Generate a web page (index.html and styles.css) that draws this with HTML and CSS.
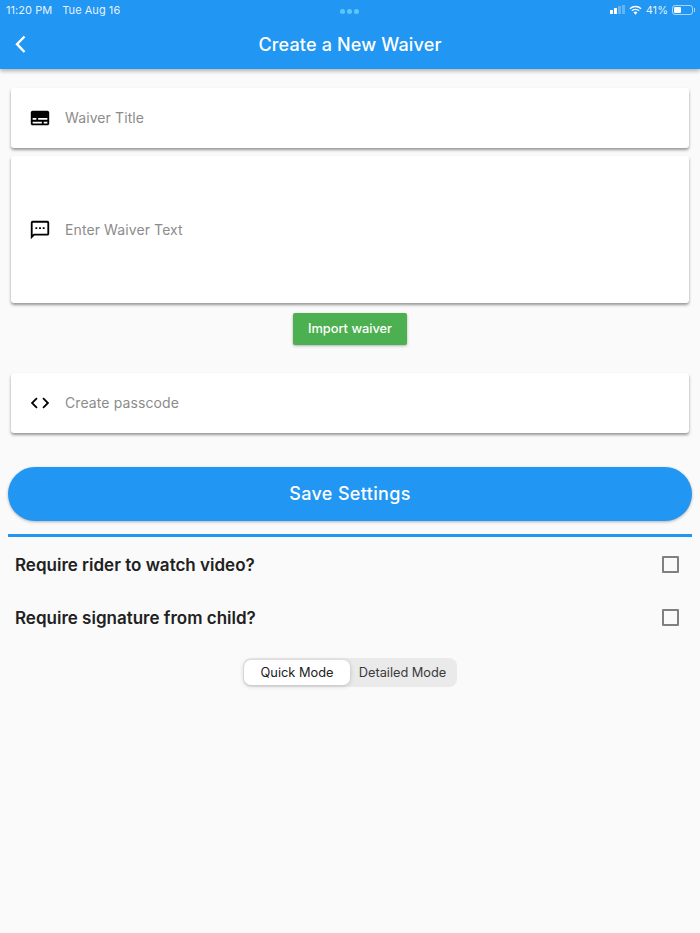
FILE: index.html
```html
<!DOCTYPE html>
<html lang="en">
<head>
    <meta charset="UTF-8">
    <meta name="viewport" content="width=device-width, initial-scale=1.0">
    <title>Create a New Waiver</title>
    <link rel="stylesheet" href="styles.css">
</head>
<body>

    <header class="app-bar">
        <div class="status-bar">
            <div class="status-left">
                <span>11:20 PM</span>
                <span>Tue Aug 16</span>
            </div>
            <div class="status-dots"><i></i><i></i><i></i></div>
            <div class="status-right">
                <div class="signal"><i></i><i></i><i class="off"></i><i class="off"></i></div>
                <svg class="wifi" width="13" height="10" viewBox="0 0 14 10">
                    <path d="M7 10 L4.9 7.7 A3 3 0 0 1 9.1 7.7 Z" fill="#fff"/>
                    <path d="M3.1 5.9 A5.6 5.6 0 0 1 10.900 5.900" fill="none" stroke="#fff" stroke-width="1.5"/>
                    <path d="M1 3.6 A8.6 8.6 0 0 1 13 3.6" fill="none" stroke="#fff" stroke-width="1.5"/>
                </svg>
                <span>41%</span>
                <div class="battery"><div class="battery-level"></div></div>
            </div>
        </div>
        <div class="title-row">
            <svg class="back" width="12" height="19" viewBox="0 0 12 19">
                <path d="M10.500 1.500 L3 9.200 L10.500 17" fill="none" stroke="#fff" stroke-width="2.4"/>
            </svg>
            <h1>Create a New Waiver</h1>
        </div>
    </header>

    <main class="content">
        <div class="fields">
            <div class="card">
                <svg class="icon" width="24" height="24" viewBox="0 0 24 24">
                    <path d="M20 4H4c-1.100 0-2 .9-2 2v12c0 1.100.9 2 2 2h16c1.100 0 2-.9 2-2V6c0-1.100-.9-2-2-2zM4 12h4v2H4v-2zm10 6H4v-2h10v2zm6 0h-4v-2h4v2zm0-4H10v-2h10v2z" fill="#000"/>
                </svg>
                <span class="placeholder">Waiver Title</span>
            </div>
            <div class="card card-tall">
                <svg class="icon" width="24" height="24" viewBox="0 0 24 24">
                    <path d="M20 2H4c-1.100 0-2 .9-2 2v18l4-4h14c1.100 0 2-.9 2-2V4c0-1.100-.9-2-2-2zm0 14H5.200L4 17.200V4h16v12zM7 9h2v2H7V9zm4 0h2v2h-2V9zm4 0h2v2h-2V9z" fill="#000"/>
                </svg>
                <span class="placeholder">Enter Waiver Text</span>
            </div>
        </div>

        <button class="import-btn">Import waiver</button>

        <div class="card passcode">
            <svg class="icon" width="24" height="24" viewBox="0 0 24 24">
                <path d="M9.400 16.600 4.800 12l4.600-4.600L8 6l-6 6 6 6 1.400-1.400zm5.200 0 4.600-4.600-4.600-4.600L16 6l6 6-6 6-1.400-1.400z" fill="#000"/>
            </svg>
            <span class="placeholder">Create passcode</span>
        </div>

        <button class="save-btn">Save Settings</button>
        <div class="divider"></div>

        <div class="option-row">
            <span>Require rider to watch video?</span>
            <div class="checkbox"></div>
        </div>
        <div class="option-row">
            <span>Require signature from child?</span>
            <div class="checkbox"></div>
        </div>

        <div class="mode-toggle">
            <div class="mode mode-active">Quick Mode</div>
            <div class="mode mode-other">Detailed Mode</div>
        </div>
    </main>

</body>
</html>
```

FILE: styles.css
```css
html, body {
    height: 100%;
}
body {
    margin: 0;
    background-color: #fafafa;
    font-family: Inter, "Noto Sans", sans-serif;
    color: #212121;
    overflow: hidden;
}
.app-bar {
    height: 69px;
    background-color: #2196f3;
    color: white;
    box-shadow: 0 2px 4px rgba(0, 0, 0, 0.3);
}
.status-bar {
    height: 19px;
    margin-bottom: 1px;
    padding: 0 5px 0 6px;
    display: flex;
    align-items: center;
    justify-content: space-between;
    font-size: 11px;
    letter-spacing: 0.05px;
    color: rgba(255, 255, 255, 0.9);
    position: relative;
}
.status-left {
    display: flex;
    gap: 10px;
}
.status-dots {
    position: absolute;
    left: 340px;
    top: 9px;
    display: flex;
    gap: 2px;
}
.status-dots i {
    width: 5px;
    height: 5px;
    border-radius: 50%;
    background-color: #5cc8fa;
}
.status-right {
    display: flex;
    align-items: center;
    gap: 4px;
}
.signal {
    display: flex;
    align-items: flex-end;
    gap: 1px;
    height: 9px;
}
.signal i {
    width: 3px;
    background-color: #fff;
}
.signal i:nth-child(1) { height: 4px; }
.signal i:nth-child(2) { height: 6px; }
.signal i:nth-child(3) { height: 8px; }
.signal i:nth-child(4) { height: 9px; }
.signal i.off {
    background-color: rgba(255, 255, 255, 0.3);
}
.battery {
    box-sizing: border-box;
    width: 21px;
    height: 10px;
    margin-right: 2px;
    padding: 1px;
    border: 1px solid rgba(255, 255, 255, 0.6);
    border-radius: 3px;
    position: relative;
}
.battery::after {
    content: "";
    position: absolute;
    right: -3px;
    top: 2px;
    width: 1px;
    height: 4px;
    background-color: rgba(255, 255, 255, 0.6);
}
.battery-level {
    width: 7px;
    height: 6px;
    background-color: #fff;
    border-radius: 1px;
}
.title-row {
    height: 49px;
    position: relative;
    display: flex;
    align-items: center;
    justify-content: center;
}
.back {
    position: absolute;
    left: 14px;
    top: 15px;
}
.title-row h1 {
    margin: 0;
    font-size: 18px;
    font-weight: 500;
    letter-spacing: 0.16px;
}
.content {
    padding: 19px 8px 0;
    display: flex;
    flex-direction: column;
}
.fields {
    display: flex;
    flex-direction: column;
    gap: 8px;
}
.card {
    height: 60px;
    margin: 0 3px;
    padding: 0 17px;
    background-color: #fff;
    border-radius: 3px;
    display: flex;
    align-items: center;
    gap: 13px;
    box-shadow: 0 2px 3px rgba(0, 0, 0, 0.4);
}
.card-tall {
    height: 147px;
}
.card-tall .placeholder {
    padding-bottom: 1px;
}
.icon {
    width: 24px;
    height: 24px;
    flex-shrink: 0;
}
.card .icon {
    transform: scale(0.92);
}
.placeholder {
    padding-bottom: 2px;
    font-size: 14px;
    letter-spacing: 0.1px;
    color: #8c8c8c;
}
.import-btn {
    align-self: center;
    width: 114px;
    height: 32px;
    margin-top: 10px;
    padding-bottom: 2px;
    background-color: #4caf50;
    color: white;
    border: none;
    border-radius: 2px;
    font-family: inherit;
    font-size: 12.8px;
    font-weight: 500;
    box-shadow: 0 1px 3px rgba(0, 0, 0, 0.3);
}
.passcode {
    margin-top: 28px;
}
.save-btn {
    height: 54px;
    margin-top: 34px;
    padding-bottom: 2px;
    background-color: #2196f3;
    color: white;
    border: none;
    border-radius: 27px;
    font-family: inherit;
    font-size: 18px;
    font-weight: 500;
    letter-spacing: 0.33px;
    box-shadow: 0 1px 3px rgba(0, 0, 0, 0.3);
}
.divider {
    height: 3px;
    margin-top: 13px;
    background-color: #2196f3;
}
.option-row {
    height: 53px;
    padding: 0 13px 0 7px;
    display: flex;
    align-items: center;
    justify-content: space-between;
    font-size: 17px;
    font-weight: 600;
}
.divider + .option-row {
    margin-top: 1px;
}
.checkbox {
    width: 13px;
    height: 13px;
    border: 2px solid #808080;
    border-radius: 1px;
}
.mode-toggle {
    align-self: center;
    width: 214px;
    height: 29px;
    margin-top: 14px;
    display: flex;
    background-color: #eaeaea;
    border-radius: 8px;
    font-size: 12.8px;
}
.mode {
    display: flex;
    align-items: center;
    justify-content: center;
    flex: 1;
    color: #3a3a3a;
}
.mode-other {
    padding-right: 2px;
    letter-spacing: -0.03px;
}
.mode-active {
    flex: 0 0 106px;
    margin: 2px 0 2px 1px;
    background-color: #fff;
    border-radius: 7px;
    color: #212121;
    box-shadow: 0 1px 5px rgba(0, 0, 0, 0.2);
}
```
